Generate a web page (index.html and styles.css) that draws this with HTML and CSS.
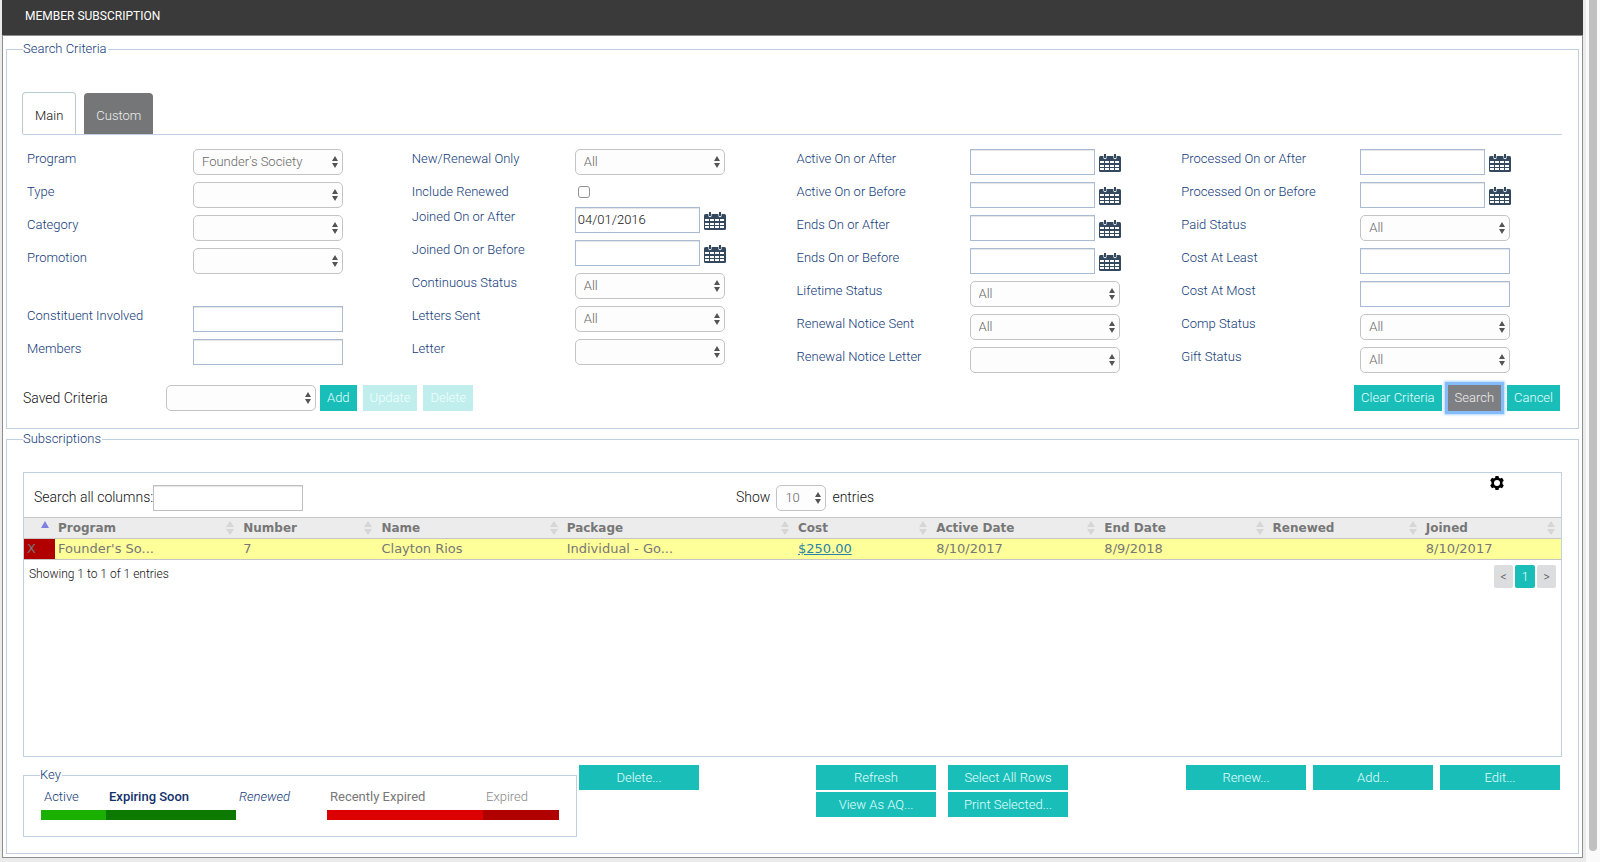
FILE: index.html
```
<!DOCTYPE html>
<html lang="en">
<head>
  <meta charset="utf-8">
  <title>Member Subscription</title>
  <link rel="stylesheet" href="styles.css">
</head>
<body>
  <svg class="symbols" aria-hidden="true">
    <symbol id="cal" viewBox="0 0 22 18">
      <path fill="#34495e" d="M1.500 2h19q1.500 0 1.500 1.500v13q0 1.500-1.500 1.500h-19Q0 18 0 16.500v-13Q0 2 1.500 2z"/>
      <path fill="#dfe5ec" d="M4.300 2h3.400v1.500a1.700 1.700 0 0 1-3.400 0zM14.300 2h3.400v1.500a1.700 1.700 0 0 1-3.400 0z"/>
      <path fill="#34495e" d="M5 0h2v4H5zM15 0h2v4h-2z"/>
      <path fill="#fff" d="M1 7h4v2H1zM6 7h4v2H6zM11 7h4v2h-4zM16 7h4v2h-4zM1 11h4v2H1zM6 11h4v2H6zM11 11h4v2h-4zM16 11h4v2h-4zM1 14h4v2H1zM6 14h4v2H6zM11 14h4v2h-4zM16 14h4v2h-4z"/>
    </symbol>
  </svg>

  <div class="page">
    <div class="window">
      <h1 class="header">MEMBER SUBSCRIPTION</h1>

      <div class="content">
        <fieldset class="box criteria">
          <legend>Search Criteria</legend>
          <div class="tabs">
            <button type="button" class="tab active">Main</button>
            <button type="button" class="tab">Custom</button>
          </div>

          <form id="formdata">
            <div class="columns">
              <div class="column col1">
                <div class="field"><label for="program">Program</label><select id="program"><option>Founder's Society</option></select></div>
                <div class="field"><label for="type">Type</label><select id="type"><option></option></select></div>
                <div class="field"><label for="category">Category</label><select id="category"><option></option></select></div>
                <div class="field spaced"><label for="promotion">Promotion</label><select id="promotion"><option></option></select></div>
                <div class="field"><label for="constituent">Constituent Involved</label><input type="text" id="constituent"></div>
                <div class="field"><label for="members">Members</label><input type="text" id="members"></div>
              </div>

              <div class="column col2">
                <div class="field"><label for="newrenewal">New/Renewal Only</label><select id="newrenewal"><option>All</option></select></div>
                <div class="field short"><label for="renewed">Include Renewed</label><input type="checkbox" id="renewed"></div>
                <div class="field"><label for="joinedafter">Joined On or After</label><input type="text" class="date" id="joinedafter" value="04/01/2016"><button type="button" class="cal" aria-label="Pick date"><svg><use href="#cal"/></svg></button></div>
                <div class="field"><label for="joinedbefore">Joined On or Before</label><input type="text" class="date" id="joinedbefore"><button type="button" class="cal" aria-label="Pick date"><svg><use href="#cal"/></svg></button></div>
                <div class="field"><label for="continuous">Continuous Status</label><select id="continuous"><option>All</option></select></div>
                <div class="field"><label for="letters">Letters Sent</label><select id="letters"><option>All</option></select></div>
                <div class="field"><label for="letter">Letter</label><select id="letter"><option></option></select></div>
              </div>

              <div class="column col3">
                <div class="field"><label for="activeafter">Active On or After</label><input type="text" class="date" id="activeafter"><button type="button" class="cal" aria-label="Pick date"><svg><use href="#cal"/></svg></button></div>
                <div class="field"><label for="activebefore">Active On or Before</label><input type="text" class="date" id="activebefore"><button type="button" class="cal" aria-label="Pick date"><svg><use href="#cal"/></svg></button></div>
                <div class="field"><label for="endsafter">Ends On or After</label><input type="text" class="date" id="endsafter"><button type="button" class="cal" aria-label="Pick date"><svg><use href="#cal"/></svg></button></div>
                <div class="field"><label for="endsbefore">Ends On or Before</label><input type="text" class="date" id="endsbefore"><button type="button" class="cal" aria-label="Pick date"><svg><use href="#cal"/></svg></button></div>
                <div class="field"><label for="lifetime">Lifetime Status</label><select id="lifetime"><option>All</option></select></div>
                <div class="field"><label for="noticesent">Renewal Notice Sent</label><select id="noticesent"><option>All</option></select></div>
                <div class="field"><label for="noticeletter">Renewal Notice Letter</label><select id="noticeletter"><option></option></select></div>
              </div>

              <div class="column col4">
                <div class="field"><label for="procafter">Processed On or After</label><input type="text" class="date" id="procafter"><button type="button" class="cal" aria-label="Pick date"><svg><use href="#cal"/></svg></button></div>
                <div class="field"><label for="procbefore">Processed On or Before</label><input type="text" class="date" id="procbefore"><button type="button" class="cal" aria-label="Pick date"><svg><use href="#cal"/></svg></button></div>
                <div class="field"><label for="paid">Paid Status</label><select id="paid"><option>All</option></select></div>
                <div class="field"><label for="costleast">Cost At Least</label><input type="text" id="costleast"></div>
                <div class="field"><label for="costmost">Cost At Most</label><input type="text" id="costmost"></div>
                <div class="field"><label for="comp">Comp Status</label><select id="comp"><option>All</option></select></div>
                <div class="field"><label for="gift">Gift Status</label><select id="gift"><option>All</option></select></div>
              </div>
            </div>

            <div class="saved">
              <label for="saved">Saved Criteria</label>
              <select id="saved"><option></option></select>
              <div class="saved_buttons">
                <button type="button" class="btn">Add</button>
                <button type="button" class="btn" disabled>Update</button>
                <button type="button" class="btn" disabled>Delete</button>
              </div>
              <div class="search_buttons">
                <button type="button" class="btn">Clear Criteria</button>
                <button type="button" class="btn focused">Search</button>
                <button type="button" class="btn">Cancel</button>
              </div>
            </div>
          </form>
        </fieldset>

        <fieldset class="box subscriptions">
          <legend>Subscriptions</legend>
          <div class="panel">
            <div class="toolbar">
              <div class="search_all"><label for="searchall">Search all columns:</label><input type="text" id="searchall"></div>
              <div class="show"><label for="entries">Show</label><select id="entries"><option>10</option></select><span>entries</span></div>
              <button type="button" class="gear" aria-label="Settings">
                <svg viewBox="0 0 14 14"><path fill="#000" fill-rule="evenodd" d="M5.500 0h3l.4 1.800 1.200.6 1.900-.6 1.800 2.800-1.300 1.400v2l1.300 1.400-1.800 2.800-1.900-.6-1.200.6-.4 1.800h-3l-.4-1.800-1.200-.6-1.900.6L.2 9.400 1.500 8V6L.2 4.600 2 1.800l1.900.6 1.200-.6zM7 4a3 3 0 1 0 0 6 3 3 0 0 0 0-6z"/></svg>
              </button>
            </div>

            <table class="results">
              <colgroup>
                <col class="w-x"><col class="w-l"><col class="w-s"><col class="w-l"><col class="w-xl"><col class="w-s"><col class="w-m"><col class="w-m"><col class="w-n"><col class="w-s">
              </colgroup>
              <thead>
                <tr>
                  <th class="asc"></th>
                  <th>Program</th>
                  <th>Number</th>
                  <th>Name</th>
                  <th>Package</th>
                  <th>Cost</th>
                  <th>Active Date</th>
                  <th>End Date</th>
                  <th>Renewed</th>
                  <th>Joined</th>
                </tr>
              </thead>
              <tbody>
                <tr>
                  <td class="expired">X</td>
                  <td>Founder's So...</td>
                  <td>7</td>
                  <td>Clayton Rios</td>
                  <td>Individual - Go...</td>
                  <td><a href="#">$250.00</a></td>
                  <td>8/10/2017</td>
                  <td>8/9/2018</td>
                  <td></td>
                  <td>8/10/2017</td>
                </tr>
              </tbody>
            </table>

            <div class="table_footer">
              <span>Showing 1 to 1 of 1 entries</span>
              <div class="pages">
                <button type="button">&lt;</button>
                <button type="button" class="current">1</button>
                <button type="button">&gt;</button>
              </div>
            </div>
          </div>

          <div class="bottom">
            <fieldset class="key">
              <legend>Key</legend>
              <div class="key_items">
                <span class="k k-active">Active</span>
                <span class="k k-soon">Expiring Soon</span>
                <span class="k k-renewed">Renewed</span>
                <span class="k k-recent">Recently Expired</span>
                <span class="k k-expired">Expired</span>
              </div>
            </fieldset>
            <button type="button" class="btn wide">Delete...</button>
            <div class="middle">
              <button type="button" class="btn wide">Refresh</button>
              <button type="button" class="btn wide">Select All Rows</button>
              <button type="button" class="btn wide">View As AQ...</button>
              <button type="button" class="btn wide">Print Selected...</button>
            </div>
            <div class="right">
              <button type="button" class="btn wide">Renew...</button>
              <button type="button" class="btn wide">Add...</button>
              <button type="button" class="btn wide">Edit...</button>
            </div>
          </div>
        </fieldset>
      </div>
    </div>
    <div class="scrollbar"><div class="thumb"></div></div>
  </div>
</body>
</html>
```
FILE: styles.css
```
* {
  box-sizing: border-box;
}
body {
  margin: 0;
  background-color: #ebebeb;
  font-family: Roboto, "Liberation Sans", sans-serif;
  font-size: 13px;
  font-weight: 300;
  line-height: 20px;
  color: #111;
}
fieldset {
  margin: 0;
  padding: 0;
  min-width: 0;
  border: 1px solid #c0cfe2;
}
legend {
  padding: 0 1px 0 0;
  color: #123a78;
}
input, select, button {
  font: inherit;
  margin: 0;
}
.symbols {
  display: none;
}
.page {
  display: flex;
  min-height: 100vh;
  padding-left: 2px;
}
.window {
  flex: 1;
  margin-bottom: 4px;
  background-color: #fff;
}
.header {
  margin: 0;
  height: 35px;
  padding: 6px 23px;
  background-color: #3a3a3a;
  color: #fff;
  font-size: 12px;
  font-weight: 400;
}
.content {
  border: 1px solid #8e8e8e;
  padding: 3px;
}
.scrollbar {
  width: 14px;
  margin-left: 3px;
  padding: 0 3px;
  background-color: #fafafa;
}
.thumb {
  height: calc(100% - 11px);
  border-radius: 0 0 4px 4px;
  background-color: #c1c1c1;
}

/* search criteria */
.box {
  padding: 0 16px;
}
.tabs {
  display: flex;
  align-items: flex-end;
  gap: 8px;
  height: 76px;
  border-bottom: 1px solid #c0cfe2;
}
.tab {
  height: 41px;
  padding: 4px 12px 0;
  border: 0;
  border-radius: 4px 4px 0 0;
  background-color: #757678;
  color: #eee;
}
.tab.active {
  height: 42px;
  margin-left: -1px;
  border: 1px solid #b9cbcb;
  border-bottom: 0;
  background-color: #fff;
  color: #111;
}
.columns {
  display: grid;
  grid-template-columns: repeat(4, 1fr);
  padding-top: 14px;
}
.field {
  display: flex;
  height: 33px;
}
.field.short {
  height: 25px;
}
.field.spaced {
  height: 58px;
}
.field label {
  padding-left: 4px;
  color: #123a78;
}
.col1 label {
  width: 170px;
}
.col2 label {
  width: 167px;
}
.col3 label {
  width: 177px;
}
.col4 label {
  width: 183px;
}
input[type="text"] {
  width: 150px;
  height: 26px;
  padding: 0 2px 1px;
  border: 1px solid #a9bad3;
  border-radius: 0;
  background-color: #fff;
  box-shadow: inset 0 1px 1px #e4e4e4;
  color: #111;
}
input.date {
  width: 125px;
}
input[type="checkbox"] {
  appearance: none;
  width: 12px;
  height: 12px;
  margin: 4px 3px;
  border: 1px solid #929292;
  border-radius: 3px;
}
select {
  appearance: none;
  width: 150px;
  height: 26px;
  padding: 0 8px;
  border: 1px solid #c4c4c4;
  border-radius: 5px;
  background: #fdfdfd url("data:image/svg+xml,%3Csvg xmlns='http://www.w3.org/2000/svg' width='6' height='12'%3E%3Cpath fill='%23555' d='M3 0l3 5H0zM3 12l3-5H0z'/%3E%3C/svg%3E") no-repeat right 4px center;
  color: #666;
}
.cal {
  width: 22px;
  height: 18px;
  margin: 5px 0 0 4px;
  padding: 0;
  border: 0;
  background: none;
}
.cal svg, .gear svg {
  display: block;
  width: 100%;
  height: 100%;
}
.btn {
  height: 26px;
  padding: 0 7px;
  border: 0;
  background-color: #19beb8;
  color: #e4fffe;
}
.btn:disabled {
  background-color: #bfeeec;
  color: #f2ffff;
}
.btn.focused {
  background-color: #7e7f83;
  color: #eee;
  box-shadow: 0 0 0 3px #84bcfb, 0 0 2px 4px #b5d7fd;
}
.saved {
  display: flex;
  align-items: center;
  padding: 5px 2px 17px 0;
}
.saved label {
  width: 143px;
  font-size: 14px;
}
.saved_buttons, .search_buttons {
  display: flex;
  gap: 6px;
  margin-left: 4px;
}
.search_buttons {
  margin-left: auto;
}

/* subscriptions */
.panel {
  height: 285px;
  margin-top: 23px;
  border: 1px solid #c0cfe2;
}
.toolbar {
  display: flex;
  align-items: flex-start;
  height: 44px;
  padding-top: 12px;
  font-size: 14px;
  line-height: 24px;
}
.search_all {
  display: flex;
  width: 702px;
  padding-left: 10px;
}
.search_all input[type="text"] {
  border-color: #bfbfbf;
}
.show {
  display: flex;
  gap: 6px;
  padding-left: 10px;
}
.show select {
  width: 50px;
  font-size: 13px;
}
.gear {
  width: 14px;
  height: 14px;
  margin: -9px 57px 0 auto;
  padding: 0;
  border: 0;
  background: none;
}
.results {
  width: 100%;
  table-layout: fixed;
  border-collapse: collapse;
  font-family: Verdana, "DejaVu Sans", sans-serif;
  font-size: 12px;
  font-weight: 400;
  color: #777;
}
.w-x {
  width: 31px;
}
.w-s {
  width: 138px;
}
.w-n {
  width: 153px;
}
.w-m {
  width: 168px;
}
.w-l {
  width: 185px;
}
.w-xl {
  width: 231px;
}
.results th, .results td {
  height: 21px;
  padding: 0 3px;
  border-top: 1px solid #c6c6c6;
  border-bottom: 1px solid #c6c6c6;
  line-height: 20px;
  text-align: left;
  white-space: nowrap;
}
.results th {
  background: #ececec url("data:image/svg+xml,%3Csvg xmlns='http://www.w3.org/2000/svg' width='8' height='14'%3E%3Cpath fill='%23d6d6d6' d='M4 0l4 6H0zM4 14l4-6H0z'/%3E%3C/svg%3E") no-repeat right 6px center;
}
.results th.asc {
  background-image: url("data:image/svg+xml,%3Csvg xmlns='http://www.w3.org/2000/svg' width='8' height='14'%3E%3Cpath fill='%238080e0' d='M4 0l4 7H0z'/%3E%3C/svg%3E");
}
.results td {
  background-color: #ffff99;
  font-size: 13px;
}
.results td.expired {
  background-color: #b00000;
}
.results a {
  color: #2b83a8;
}
.table_footer {
  display: flex;
  justify-content: space-between;
  padding: 5px 5px 0;
  font-size: 12px;
  line-height: 18px;
}
.pages {
  display: flex;
  gap: 2px;
}
.pages button {
  width: 19px;
  height: 23px;
  padding: 0;
  border: 0;
  border-radius: 2px;
  background-color: #dcdddf;
  color: #555;
}
.pages .current {
  width: 20px;
  background-color: #19beb8;
  color: #fff;
}

/* key and buttons */
.bottom {
  display: flex;
  align-items: flex-start;
  height: 96px;
  padding-top: 8px;
}
.key {
  width: 554px;
  height: 72px;
  margin-right: 2px;
  padding: 0 16px;
}
.key_items {
  display: flex;
  padding: 1px 0 0 1px;
  line-height: 22px;
}
.k {
  height: 34px;
  padding-left: 3px;
  border-bottom: 10px solid transparent;
  color: #123a78;
}
.k-active {
  width: 65px;
  border-color: #19b000;
}
.k-soon {
  width: 130px;
  border-color: #0c7a00;
  color: #11316b;
  font-weight: 500;
}
.k-renewed {
  width: 91px;
  font-style: italic;
}
.k-recent {
  width: 156px;
  border-color: #dc0000;
  color: #777;
  font-weight: 400;
}
.k-expired {
  width: 76px;
  border-color: #b00000;
  color: #888;
}
.wide {
  width: 120px;
  height: 25px;
}
.middle {
  display: grid;
  grid-template-columns: auto auto;
  gap: 2px 12px;
  margin-left: 117px;
}
.right {
  display: flex;
  gap: 7px;
  margin-left: auto;
  padding-right: 2px;
}
```
